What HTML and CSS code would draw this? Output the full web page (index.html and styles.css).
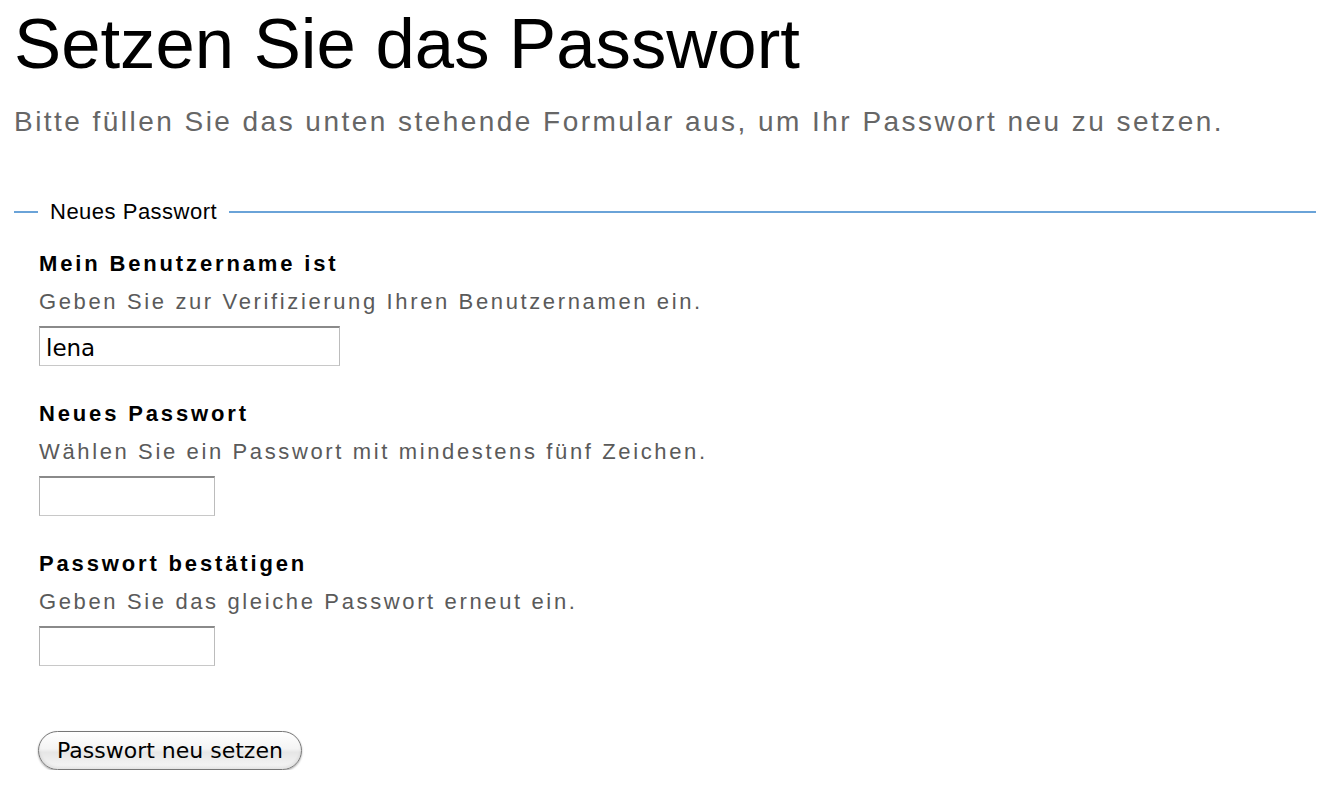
FILE: index.html
```html
<!DOCTYPE html>
<html lang="de">
<head>
<meta charset="utf-8">
<title>Setzen Sie das Passwort</title>
<link rel="stylesheet" href="styles.css">
</head>
<body>
<main class="page">
  <h1 class="title">Setzen Sie das Passwort</h1>
  <p class="intro">Bitte füllen Sie das unten stehende Formular aus, um Ihr Passwort neu zu setzen.</p>
  <form class="form">
    <fieldset class="fieldset">
      <legend class="legend">Neues Passwort</legend>
      <div class="field">
        <label class="label" for="user">Mein Benutzername ist</label>
        <div class="desc">Geben Sie zur Verifizierung Ihren Benutzernamen ein.</div>
        <input class="input input-wide" id="user" type="text" value="lena">
      </div>
      <div class="field">
        <label class="label" for="pw1">Neues Passwort</label>
        <div class="desc">Wählen Sie ein Passwort mit mindestens fünf Zeichen.</div>
        <input class="input input-short" id="pw1" type="password">
      </div>
      <div class="field">
        <label class="label" for="pw2">Passwort bestätigen</label>
        <div class="desc">Geben Sie das gleiche Passwort erneut ein.</div>
        <input class="input input-short" id="pw2" type="password">
      </div>
    </fieldset>
    <div class="actions">
      <button class="button" type="button">Passwort neu setzen</button>
    </div>
  </form>
</main>
</body>
</html>
```
FILE: styles.css
```css
html, body {
  margin: 0;
  padding: 0;
  background: #fff;
}
.page {
  padding: 0 16px 0 14px;
  font-family: "Liberation Sans", Arial, sans-serif;
}
.title {
  margin: 0;
  padding-top: 6px;
  font-size: 70.7px;
  font-weight: normal;
  line-height: 76px;
  color: #000;
}
.intro {
  margin: 22px 0 0 0;
  font-size: 28px;
  line-height: 36px;
  letter-spacing: 2.46px;
  color: #666;
}
.form {
  margin-top: 59px;
}
.fieldset {
  margin: 0;
  padding: 0 0 0 25px;
  border: 0;
  border-top: 2px solid #6aa3d8;
  min-width: 0;
}
.legend {
  margin-left: -1px;
  padding: 0 12px;
  font-size: 22px;
  letter-spacing: 0.5px;
  color: #000;
}
.field {
  display: flex;
  flex-direction: column;
  align-items: flex-start;
  margin-bottom: 33px;
}
.field:first-of-type {
  margin-top: 24px;
}
.label {
  font-size: 22px;
  font-weight: bold;
  line-height: 30px;
  letter-spacing: 2.85px;
  color: #000;
}
.desc {
  margin-top: 8px;
  font-size: 22px;
  line-height: 30px;
  color: #5a5a5a;
  letter-spacing: 2.63px;
}
.input {
  box-sizing: border-box;
  margin: 9px 0 0 0;
  height: 40px;
  padding: 2px 6px 0 6px;
  border: 1px solid #c8c8c8;
  border-top: 2px solid #8a8a8a;
  border-left-color: #b4b4b4;
  border-right-color: #bcbcbc;
  background: #fff;
  font-family: "DejaVu Sans", sans-serif;
  font-size: 23px;
  color: #000;
}
.input-wide { width: 301px; }
.input-short { width: 176px; }
.actions {
  padding-left: 24px;
  margin-top: 32px;
}
.button {
  box-sizing: border-box;
  height: 39px;
  padding: 0 18px;
  border: 1px solid #777;
  border-radius: 20px;
  background: linear-gradient(#ffffff 0%, #f4f4f4 45%, #e6e6e6 55%, #f6f6f6 100%);
  box-shadow: 0 1px 2px rgba(0,0,0,0.35), inset 0 -2px 3px rgba(0,0,0,0.08);
  font-family: "DejaVu Sans", sans-serif;
  font-size: 22px;
  color: #000;
}
```
